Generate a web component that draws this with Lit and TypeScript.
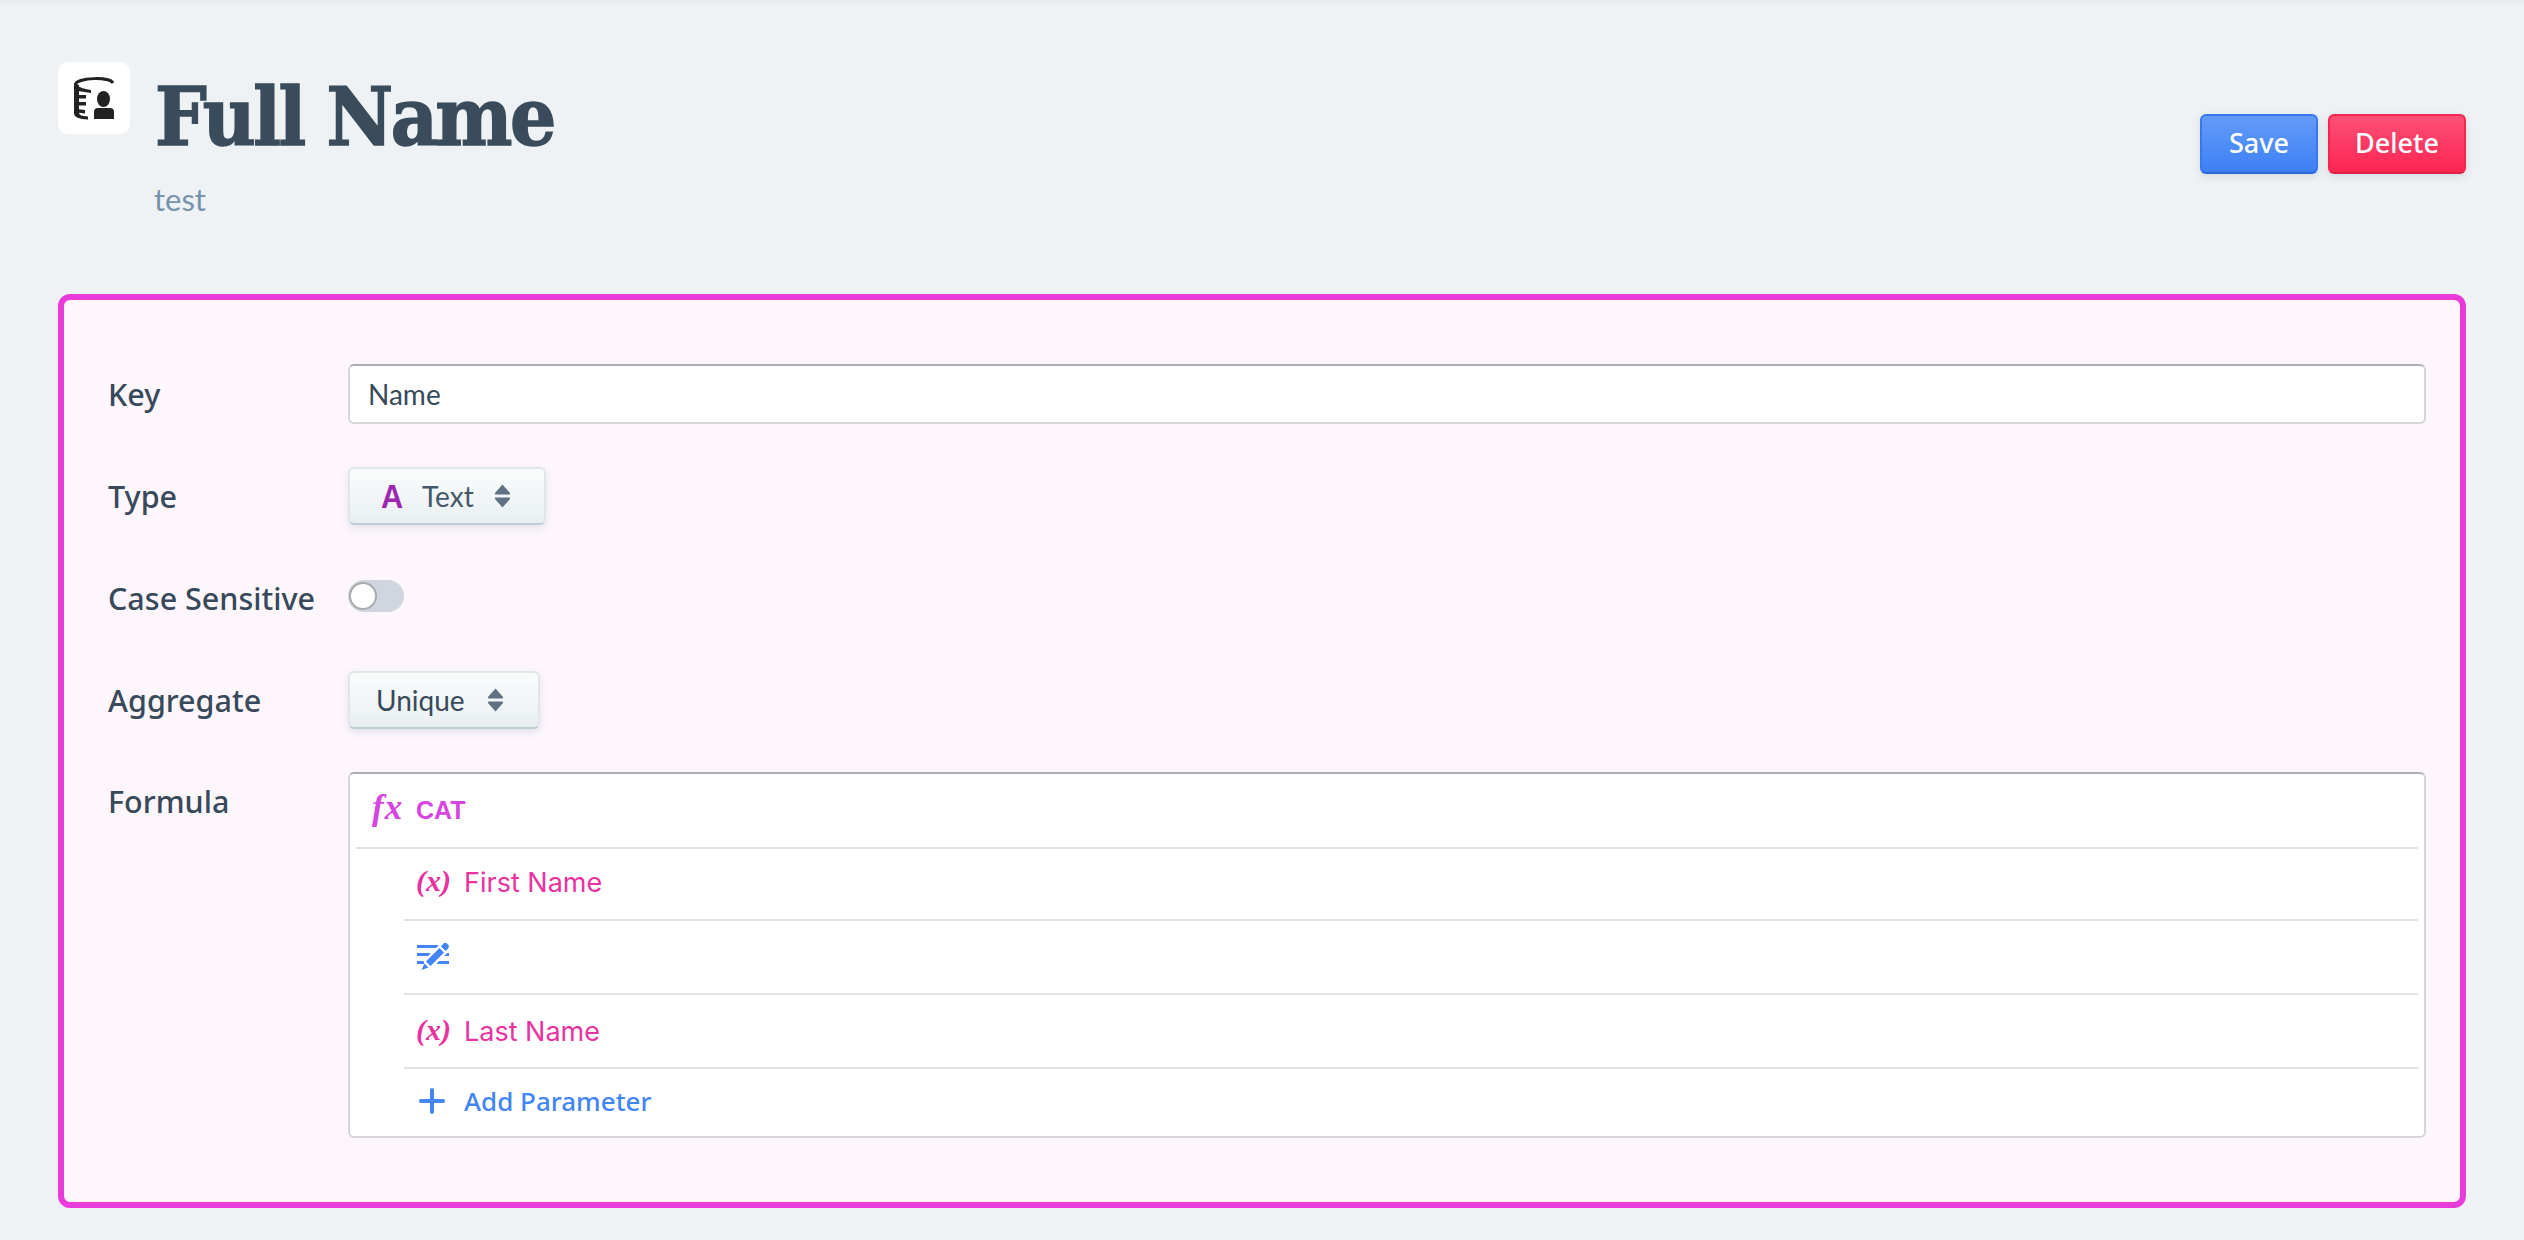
import { LitElement, html, css, svg } from "lit";
import { customElement } from "lit/decorators.js";

const caret = svg`<svg class="caret" viewBox="0 0 17 24"><path d="M8.5 .5 L16 9 Q16.600 10.500 15 10.500 L2 10.500 Q.4 10.500 1 9 Z M2 13.500 L15 13.500 Q16.600 13.500 16 15 L8.5 23.500 L1 15 Q.4 13.500 2 13.500 Z" fill="#5f7183"/></svg>`;

@customElement("app-root")
export class AppRoot extends LitElement {
  static styles = css`
    :host { display: block; width: 2524px; height: 1240px; background: #eef2f5; font-family: "Lato", "Liberation Sans", sans-serif; color: #37495a; box-sizing: border-box; padding: 62px 58px 0; position: relative; overflow: hidden; }
    .topshade { position: absolute; left: 0; right: 0; top: 0; height: 6px; background: linear-gradient(#e6eaed, #eef2f5); }
    .head { display: flex; align-items: flex-start; height: 232px; }
    .logo { width: 72px; height: 72px; background: #fff; border-radius: 10px; display: flex; align-items: center; justify-content: center; flex: none; }
    .logo svg { width: 40px; height: 44px; }
    .titles { margin-left: 25px; flex: 1; }
    h1 { margin: 5px 0 0; font: bold 81px/100px "DejaVu Serif", serif; font-stretch: condensed; color: #3a4c5b; height: 98px; letter-spacing: -2.500px; -webkit-text-stroke: 1.500px #3a4c5b; }
    .sub { font-size: 31px; line-height: 36px; color: #7793ab; margin: 16px 0 0 -1px; }
    .actions { display: flex; gap: 10px; margin-top: 52px; }
    .btn { height: 60px; box-sizing: border-box; border-radius: 6px; color: #fff; font: 500 27px "Noto Sans", sans-serif; display: flex; align-items: center; justify-content: center; box-shadow: 0 3px 8px rgba(60,80,100,.14); padding-bottom: 4px; }
    .save { width: 118px; background: linear-gradient(#639bf8, #3d80f5); border: 2px solid #3a76ec; border-bottom-color: #2f66dd; }
    .del { width: 138px; background: linear-gradient(#fb5075, #fd2553); border: 2px solid #f5264f; border-bottom-color: #dd2245; }
    .card { width: 2408px; height: 914px; box-sizing: border-box; border: 6px solid #e93ada; border-radius: 12px; background: #fdf6fd; padding: 64px 34px 64px 44px; display: grid; grid-template-columns: 240px 1fr; grid-template-rows: 60px 58px 60px 58px auto; row-gap: 43px; align-items: center; position: relative; }
    .label { font: 500 30.500px/40px "Noto Sans", sans-serif; color: #37495a; }
    .label.top { align-self: start; padding-top: 9px; }
    .input { height: 60px; box-sizing: border-box; background: #fff; border: 2px solid #d6d6d8; border-top-color: #aeaeb0; border-radius: 6px; padding-left: 18px; display: flex; align-items: center; font-size: 28px; }
    .select { height: 58px; box-sizing: border-box; display: inline-flex; align-items: center; justify-self: start; border: 2px solid #dfe7ea; border-bottom-color: #bdcdd5; border-radius: 6px; background: linear-gradient(#fafcfc, #e9eff1); box-shadow: 0 3px 8px rgba(60,80,100,.12); font-size: 28px; color: #455868; }
    .t { width: 198px; padding-left: 31px; }
    .a { width: 192px; padding-left: 26px; color: #37495a; }
    .A { font: bold 34px/1 "Liberation Sans", sans-serif; color: #9c27b0; width: 41px; transform: scaleX(.9); transform-origin: left center; }
    .caret { width: 17px; height: 24px; flex: none; }
    .t .caret { margin-left: 20px; }
    .a .caret { margin-left: 22px; }
    .toggle { width: 56px; height: 32px; border-radius: 16px; background: #d0d5de; position: relative; justify-self: start; margin-top: -4px; }
    .knob { position: absolute; left: 1px; top: 2px; width: 28px; height: 28px; box-sizing: border-box; border-radius: 50%; background: #fff; border: 2.500px solid #a9abae; }
    .formula { height: 366px; box-sizing: border-box; background: #fff; border: 2px solid #d6d6d8; border-top-color: #aeaeb0; border-radius: 6px; padding: 0 6px; display: flex; flex-direction: column; }
    .row { display: flex; align-items: center; font-size: 28px; border-bottom: 2px solid #e3e3e3; flex: none; box-sizing: border-box; }
    .row.root { height: 75px; padding-left: 8px; }
    .row.child { height: 74px; margin-left: 48px; padding-left: 12px; }
    .row.first { height: 72px; padding-bottom: 3px; }
    .row.last { border: 0; height: 68px; padding-bottom: 4px; }
    .fx { font: italic bold 35px/1 "Liberation Serif", serif; color: #d645e0; width: 52px; margin-top: -6px; letter-spacing: 1px; flex: none; box-sizing: border-box; padding-left: 8px; }
    .cat { font: bold 25px/1 "Liberation Sans", sans-serif; color: #d645e0; }
    .var { font: italic bold 30px/1 "Liberation Serif", serif; color: #e8329f; width: 48px; margin-top: -3px; flex: none; }
    .name { font-family: Inter, sans-serif; color: #e8329f; font-size: 27px; }
    .pen { width: 32px; height: 28px; margin: -3px 0 0 1px; }
    .plus { width: 26px; height: 26px; margin: 0 19px 0 3px; flex: none; }
    .add { font: 500 26px "Noto Sans", sans-serif; color: #4285f4; }
  `;

  render() {
    return html`
      <div class="topshade"></div>
      <div class="head">
        <div class="logo">
          <svg viewBox="0 0 40 44" fill="none">
            <path d="M1.500 8 C4 1.500 36 .5 39 7" stroke="#222" stroke-width="3"/>
            <path d="M0 7 L5 9 L5 37 Q5 40 14 40.500 L14 43.500 Q0 43 0 37 Z" fill="#222"/>
            <path d="M2 9 Q8 13 17 14 L17 17 L4 15 Z M3 19 L12 19 L12 22.500 L3 22.500 Z M3 26 L12 26 L12 29.500 L3 29.500 Z M3 33 L11 34 L11 37.500 L3 36.500 Z" fill="#222"/>
            <ellipse cx="29.500" cy="23" rx="6.500" ry="8" fill="#222"/>
            <path d="M20 43 L20 36 Q20 32 24 32 L36 32 Q40 32 40 36 L40 43 Z" fill="#222"/>
          </svg>
        </div>
        <div class="titles"><h1>Full Name</h1><div class="sub">test</div></div>
        <div class="actions"><div class="btn save">Save</div><div class="btn del">Delete</div></div>
      </div>
      <div class="card">
        <div class="label">Key</div>
        <div class="input">Name</div>
        <div class="label">Type</div>
        <div class="select t"><span class="A">A</span><span>Text</span>${caret}</div>
        <div class="label">Case Sensitive</div>
        <div class="toggle"><div class="knob"></div></div>
        <div class="label">Aggregate</div>
        <div class="select a"><span>Unique</span>${caret}</div>
        <div class="label top">Formula</div>
        <div class="formula">
          <div class="row root"><span class="fx">fx</span><span class="cat">CAT</span></div>
          <div class="row child first"><span class="var">(x)</span><span class="name">First Name</span></div>
          <div class="row child">
            <svg class="pen" viewBox="0 0 32 28"><path d="M0 3h22v3H0zM0 11h15v3H0zM25 11h7v3h-7zM0 19h7v3H0zM20 19h12v3H20z" fill="#4285f4"/><path d="M8 19 L23 4 L29 10 L13 26 Z" fill="#fff" stroke="#fff" stroke-width="3"/><path d="M9 19.500 L22.500 6 L27 10.500 L13.500 24 Z M24 4.500 L26.500 1.500 Q28 0 30 1.500 L31.500 3 Q32.500 5 31 6.500 L28.500 9 Z M4.500 28 L7.500 21.500 L11.500 25.500 Z" fill="#4285f4"/></svg>
          </div>
          <div class="row child"><span class="var">(x)</span><span class="name">Last Name</span></div>
          <div class="row child last"><svg class="plus" viewBox="0 0 26 26"><path d="M13 2v22M2 13h22" stroke="#4285f4" stroke-width="4" stroke-linecap="round"/></svg><span class="add">Add Parameter</span></div>
        </div>
      </div>
    `;
  }
}
